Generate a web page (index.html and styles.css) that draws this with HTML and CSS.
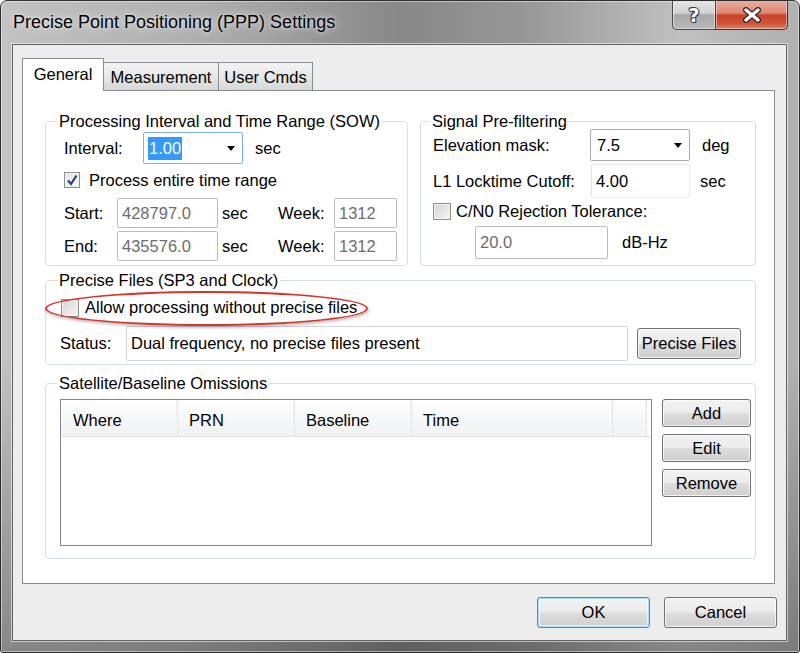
FILE: index.html
```html
<!DOCTYPE html>
<html lang="en">
<head>
  <meta charset="UTF-8" />
  <title>Precise Point Positioning (PPP) Settings</title>
  <link rel="stylesheet" href="styles.css">
</head>
<body>
  <div class="window">
    <div class="titlebar">
      <span class="title">Precise Point Positioning (PPP) Settings</span>
      <div class="caption-btns">
        <div class="cap-btn help-btn"><span class="help-glyph">?</span></div>
        <div class="cap-btn close-btn">
          <svg width="22" height="16" viewBox="0 0 22 16">
            <path d="M5 3 L17 13 M17 3 L5 13" stroke="#3b2a28" stroke-width="6" stroke-linecap="round" fill="none"/>
            <path d="M5 3 L17 13 M17 3 L5 13" stroke="#fff" stroke-width="3.4" stroke-linecap="round" fill="none"/>
          </svg>
        </div>
      </div>
    </div>

    <div class="client">
      <div class="tabs">
        <div class="tab active">General</div>
        <div class="tab tab-meas">Measurement</div>
        <div class="tab tab-user">User Cmds</div>
      </div>

      <div class="tab-page">
        <div class="top-groups">
          <!-- processing interval -->
          <fieldset class="group g-interval">
            <legend>Processing Interval and Time Range (SOW)</legend>
            <div class="row r-interval">
              <span class="lbl w-interval">Interval:</span>
              <div class="combo combo-focus">
                <span class="sel-text">1.00</span>
                <span class="arrow"></span>
              </div>
              <span class="unit">sec</span>
            </div>
            <div class="row r-check">
              <span class="cb checked">
                <svg width="14" height="14" viewBox="0 0 14 14"><path d="M3 7.5 L6 11 L11.5 2.5" stroke="#24418a" stroke-width="2.2" fill="none"/></svg>
              </span>
              <span>Process entire time range</span>
            </div>
            <div class="row r-range">
              <span class="lbl w-start">Start:</span>
              <div class="tb dis w-sow">428797.0</div>
              <span class="lbl w-sec">sec</span>
              <span class="lbl w-week">Week:</span>
              <div class="tb dis w-wk">1312</div>
            </div>
            <div class="row r-range r-end">
              <span class="lbl w-start">End:</span>
              <div class="tb dis w-sow">435576.0</div>
              <span class="lbl w-sec">sec</span>
              <span class="lbl w-week">Week:</span>
              <div class="tb dis w-wk">1312</div>
            </div>
          </fieldset>

          <!-- signal pre-filtering -->
          <fieldset class="group g-signal">
            <legend>Signal Pre-filtering</legend>
            <div class="row r-elev">
              <span class="lbl w-elev">Elevation mask:</span>
              <div class="combo">
                <span>7.5</span>
                <span class="arrow"></span>
              </div>
              <span class="unit">deg</span>
            </div>
            <div class="row r-lock">
              <span class="lbl w-lock">L1 Locktime Cutoff:</span>
              <div class="tb soft w-lockin">4.00</div>
              <span class="unit unit-lock">sec</span>
            </div>
            <div class="row r-cn0">
              <span class="cb"></span>
              <span>C/N0 Rejection Tolerance:</span>
            </div>
            <div class="row r-db">
              <div class="tb dis w-db">20.0</div>
              <span class="unit unit-db">dB-Hz</span>
            </div>
          </fieldset>
        </div>

        <!-- precise files -->
        <fieldset class="group g-precise">
          <legend>Precise Files (SP3 and Clock)</legend>
          <div class="row r-allow">
            <span class="cb"></span>
            <span>Allow processing without precise files</span>
            <span class="annot"></span>
          </div>
          <div class="row r-status">
            <span class="lbl w-status">Status:</span>
            <div class="tb status-box">Dual frequency, no precise files present</div>
            <button class="btn btn-precise">Precise Files</button>
          </div>
        </fieldset>

        <!-- omissions -->
        <fieldset class="group g-omit">
          <legend>Satellite/Baseline Omissions</legend>
          <div class="omit-body">
            <div class="list">
              <div class="list-head">
                <div class="col c-where">Where</div>
                <div class="col c-prn">PRN</div>
                <div class="col c-base">Baseline</div>
                <div class="col c-time">Time</div>
                <div class="col c-end"></div>
              </div>
            </div>
            <div class="side-btns">
              <button class="btn">Add</button>
              <button class="btn">Edit</button>
              <button class="btn">Remove</button>
            </div>
          </div>
        </fieldset>
      </div>

      <div class="dialog-btns">
        <button class="btn btn-dlg btn-default">OK</button>
        <button class="btn btn-dlg">Cancel</button>
      </div>
    </div>
  </div>
</body>
</html>
```

FILE: styles.css
```css
body {
  margin: 0;
  font-family: 'Liberation Sans', Arial, sans-serif;
  font-size: 16.5px;
  color: #000;
}
.window {
  width: 800px;
  height: 653px;
  box-sizing: border-box;
  border: 1px solid #2e2e2e;
  border-radius: 7px 7px 3px 3px;
  background:
    linear-gradient(to bottom, rgba(0, 0, 0, 0) 55%, rgba(0, 0, 0, 0.3) 100%),
    linear-gradient(to right, #c2c2c2 0%, #afafaf 25%, #888888 50%, #969696 65%, #c0c0c0 85%, #b0b0b0 100%);
  box-shadow: inset 0 0 0 1px rgba(255, 255, 255, 0.45);
  display: flex;
  flex-direction: column;
  overflow: hidden;
}

/* title bar */
.titlebar {
  height: 43px;
  flex: none;
  display: flex;
  align-items: flex-start;
  padding-left: 12px;
}
.title {
  padding-top: 11px;
  font-size: 18px;
  line-height: 20px;
  text-shadow: 0 0 8px rgba(255, 255, 255, 0.8), 0 0 3px rgba(255, 255, 255, 0.6);
}
.caption-btns {
  margin-left: auto;
  margin-right: 11px;
  margin-top: -1px;
  display: flex;
}
.cap-btn {
  height: 30px;
  box-sizing: border-box;
  border: 1px solid #4b4b4b;
  border-top: none;
  display: flex;
  align-items: center;
  justify-content: center;
  box-shadow: inset 0 0 0 1px rgba(255, 255, 255, 0.45);
}
.help-btn {
  width: 43px;
  border-right: none;
  border-radius: 0 0 0 5px;
  background: linear-gradient(#e6e6e6 0%, #d2d2d2 45%, #a8a8a8 52%, #b9b9b9 100%);
}
.help-glyph {
  font-family: 'DejaVu Sans', sans-serif;
  font-weight: bold;
  font-size: 19px;
  color: #fff;
  text-shadow: 1px 0 #2b3654, -1px 0 #2b3654, 0 1px #2b3654, 0 -1px #2b3654, 1px 1px #2b3654, -1px -1px #2b3654;
}
.close-btn {
  width: 73px;
  border-color: #5b2a22;
  border-radius: 0 0 5px 0;
  background: linear-gradient(#eab0a2 0%, #de8570 45%, #c8442a 52%, #cf5338 80%, #e08365 100%);
}

/* client area */
.client {
  flex: 1;
  margin: 0 12px 11px 11px;
  background: #ededed;
  border: 1px solid #626262;
  box-shadow: 0 0 0 1px rgba(255, 255, 255, 0.55);
  display: flex;
  flex-direction: column;
  padding: 13px 9px 0 9px;
}
.tabs {
  display: flex;
  align-items: flex-end;
  height: 32px;
}
.tab {
  box-sizing: border-box;
  height: 28px;
  border: 1px solid #898c95;
  border-bottom: none;
  margin-left: -1px;
  background: linear-gradient(#f3f3f3, #e7e7e7 50%, #d7d7d7);
  display: flex;
  align-items: center;
  justify-content: center;
  padding-top: 1px;
}
.tab.active {
  width: 82px;
  margin-left: 0;
  background: #fff;
  position: relative;
  z-index: 1;
  margin-bottom: -1px;
  height: 33px;
  padding-bottom: 2px;
}
.tab-meas { width: 116px; }
.tab-user { width: 95px; }

.tab-page {
  height: 494px;
  box-sizing: border-box;
  margin-right: 2px;
  background: #fff;
  border: 1px solid #898c95;
  padding: 21px 18px 0 22px;
}

/* group boxes */
.top-groups {
  display: flex;
  gap: 12px;
}
.group {
  margin: 0;
  padding: 0 14px;
  border: 1px solid #d5dfe5;
  border-radius: 4px;
  min-width: 0;
}
.group legend {
  padding: 0 2px;
  margin-left: -3px;
  line-height: 18px;
}
.row {
  display: flex;
  align-items: center;
}
.lbl { flex: none; }
.unit { margin-left: 12px; }

.g-interval {
  width: 363px;
  box-sizing: border-box;
  padding: 0 0 4px 18px;
}
.g-interval legend { margin-left: -7px; }
.r-interval { margin-top: 2px; height: 32px; }
.w-interval { width: 79px; }
.r-check { height: 32px; }
.r-range { margin-top: 2px; height: 30px; }
.r-end { margin-top: 3px; }
.w-start { width: 53px; }
.w-sow { width: 101px; }
.w-sec { width: 56px; margin-left: 4px; }
.w-week { width: 56px; }
.w-wk { width: 63px; }

.g-signal {
  flex: 1;
  padding: 0 0 4px 12px;
}
.r-elev { margin-top: -1px; height: 32px; }
.w-elev { width: 157px; }
.r-lock { margin-top: 3px; height: 34px; }
.w-lock { width: 158px; }
.w-lockin { width: 99px; }
.unit-lock { margin-left: 10px; }
.r-cn0 { height: 26px; }
.r-cn0 .cb { width: 18px; height: 17px; margin-right: 5px; }
.r-db { margin-top: 2px; height: 33px; }
.w-db { width: 133px; margin-left: 42px; }
.unit-db { margin-left: 14px; }

.g-precise {
  margin-top: 5px;
  padding-bottom: 3px;
}
.r-allow {
  height: 37px;
  position: relative;
}
.r-allow .cb { margin-left: 1px; width: 18px; height: 18px; margin-right: 6px; }
.annot {
  position: absolute;
  left: -15px;
  top: 2px;
  width: 323px;
  height: 35px;
  box-sizing: border-box;
  border: 2px solid #d8322b;
  border-radius: 50%;
  box-shadow: 1px 2px 3px rgba(0, 0, 0, 0.25);
}
.r-status { height: 35px; }
.w-status { width: 66px; }
.status-box {
  width: 502px;
  height: 35px;
}
.btn-precise {
  width: 109px;
  height: 31px;
  margin-left: 9px;
}

.g-omit {
  margin-top: 9px;
  padding: 0 4px 12px 14px;
}
.omit-body {
  display: flex;
  gap: 10px;
  margin-top: 7px;
}
.list {
  width: 592px;
  height: 147px;
  flex: none;
  box-sizing: border-box;
  border: 1px solid #828790;
  background: #fff;
}
.list-head {
  display: flex;
  height: 37px;
  box-sizing: border-box;
  border-bottom: 1px solid #e3e3e3;
}
.col {
  box-sizing: border-box;
  height: 36px;
  border-right: 1px solid #e2e3e5;
  box-shadow: inset -1px 0 0 #f7f7f7;
  background: linear-gradient(#ffffff, #f7f8f9 50%, #f0f1f2);
  padding: 4px 0 0 11px;
  display: flex;
  align-items: center;
}
.c-where { width: 117px; padding-left: 12px; }
.c-prn { width: 117px; }
.c-base { width: 117px; }
.c-time { width: 201px; }
.c-end { width: 34px; }
.side-btns {
  display: flex;
  flex-direction: column;
  gap: 7px;
}
.side-btns .btn {
  width: 89px;
  height: 28px;
}

/* inputs */
.combo {
  width: 100px;
  height: 32px;
  box-sizing: border-box;
  border: 1px solid #acacac;
  border-radius: 2px;
  background: #fff;
  display: flex;
  align-items: center;
  padding: 0 7px 0 6px;
  justify-content: space-between;
}
.combo-focus {
  border-color: #7eb4ea;
  padding-left: 4px;
}
.sel-text {
  background: #3399ff;
  color: #fff;
  padding: 2px 1px;
}
.arrow {
  width: 0;
  height: 0;
  border-left: 4px solid transparent;
  border-right: 4px solid transparent;
  border-top: 5px solid #000;
}
.tb {
  box-sizing: border-box;
  height: 100%;
  border: 1px solid #b9bcc0;
  border-radius: 2px;
  background: #fff;
  display: flex;
  align-items: center;
  padding-left: 4px;
  flex: none;
}
.tb.dis { color: #6d6d6d; }
.tb.soft {
  border-color: #dde3e9 #e6e9ec #eef0f2 #e0e4e8;
}
.status-box { border-color: #d2d6da; }
.cb {
  width: 16px;
  height: 16px;
  box-sizing: border-box;
  flex: none;
  border: 1px solid #8e8f8f;
  background: linear-gradient(135deg, #d3d3d3, #f6f6f6);
  box-shadow: inset 0 0 0 1px #f2f2f2;
  display: flex;
  align-items: center;
  justify-content: center;
  margin-right: 9px;
}
.cb.checked {
  background: linear-gradient(135deg, #e3e3e3, #fbfbfb);
}

/* buttons */
.btn {
  font: inherit;
  color: #000;
  padding: 0;
  box-sizing: border-box;
  border: 1px solid #707070;
  border-radius: 3px;
  background: linear-gradient(#f2f2f2 0%, #ebebeb 48%, #dddddd 52%, #cfcfcf 100%);
  box-shadow: inset 0 0 0 1px rgba(255, 255, 255, 0.75);
}
.dialog-btns {
  display: flex;
  justify-content: flex-end;
  gap: 14px;
  margin-top: 13px;
}
.btn-dlg {
  width: 113px;
  height: 31px;
}
.btn-default {
  border-color: #3c8fd0;
  box-shadow: inset 0 0 0 1px #a9dcf6, inset 0 0 0 2px rgba(255, 255, 255, 0.6);
}
```
